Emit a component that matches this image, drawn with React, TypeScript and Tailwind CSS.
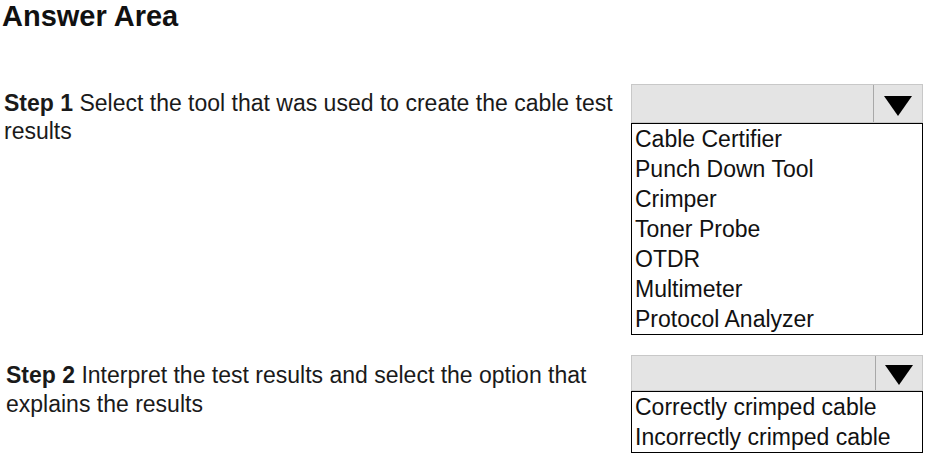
const font = { fontFamily: '"Liberation Sans", Arial, sans-serif' };

const Arrow = () => (
  <svg width="28" height="20" viewBox="0 0 28 20">
    <polygon points="0,0 28,0 14,20" fill="#000" />
  </svg>
);

function Dropdown({ items, height, split }: { items: string[]; height: string; split: string }) {
  return (
    <div className="w-[292px]">
      <div className={`flex border border-[#c8c8c8] bg-[#e4e4e4] ${height}`}>
        <div className={`shrink-0 border-r border-[#a8a8a8] ${split}`} />
        <div className="flex flex-1 items-center justify-center pt-1">
          <Arrow />
        </div>
      </div>
      <ul className="border border-black bg-white pl-[3px] text-[23px] leading-[30px] text-[#111]">
        {items.map((it) => (
          <li key={it}>{it}</li>
        ))}
      </ul>
    </div>
  );
}

export default function App() {
  return (
    <div className="h-[456px] w-[926px] bg-white text-black" style={font}>
      <h1 className="pl-[2px] text-[29px] font-bold leading-[32px] text-[#111]">Answer Area</h1>

      <div className="mt-[52px] flex">
        <p className="ml-[4px] mt-[5px] w-[627px] text-[23px] leading-[28px] text-[#1a1a1a]">
          <b>Step 1</b> Select the tool that was used to create the cable test results
        </p>
        <Dropdown
          height="h-[39px]"
          split="w-[242px]"
          items={[
            "Cable Certifier",
            "Punch Down Tool",
            "Crimper",
            "Toner Probe",
            "OTDR",
            "Multimeter",
            "Protocol Analyzer",
          ]}
        />
      </div>

      <div className="mt-[20px] flex">
        <p className="ml-[6px] mt-[6px] w-[625px] pr-[20px] text-[23px] leading-[29px] text-[#1a1a1a]">
          <b>Step 2</b> Interpret the test results and select the option that explains the results
        </p>
        <Dropdown
          height="h-[36px]"
          split="w-[244px]"
          items={["Correctly crimped cable", "Incorrectly crimped cable"]}
        />
      </div>
    </div>
  );
}
